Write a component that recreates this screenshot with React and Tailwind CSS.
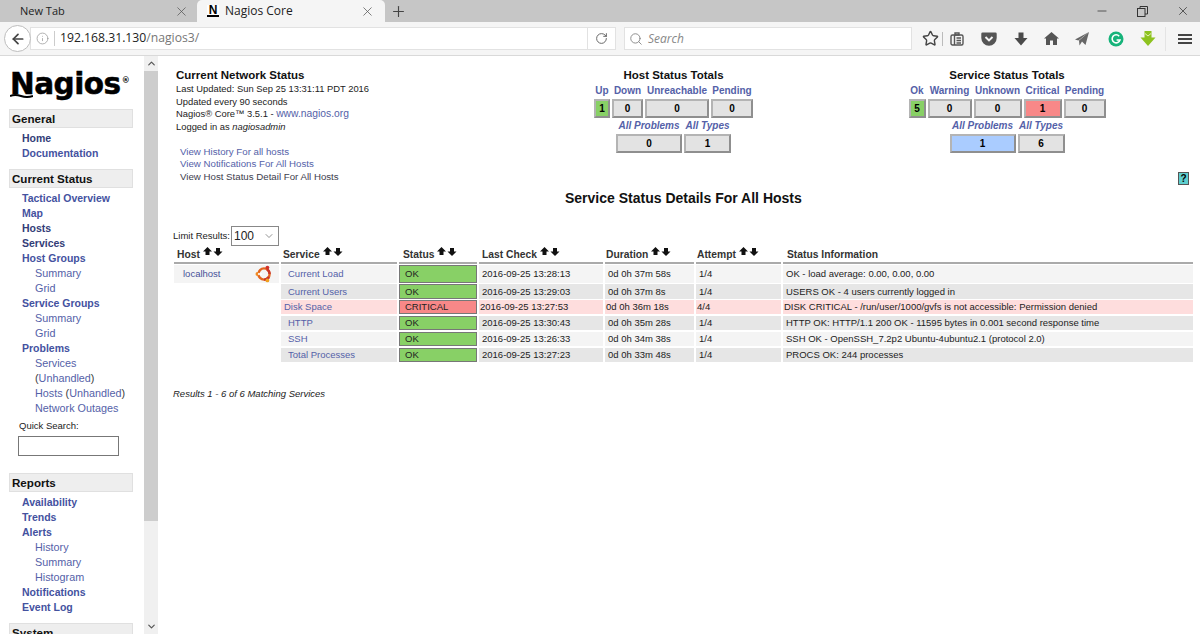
import React from "react";
import { ArrowLeft, Info, RotateCw, Search, Star, X, Plus, Minus, ChevronUp, ChevronDown, ChevronDown as Caret } from "lucide-react";

const SIDEBAR = [
  {
    title: "General",
    links: [
      ["Home", 0, true],
      ["Documentation", 0],
    ],
  },
  {
    title: "Current Status",
    links: [
      ["Tactical Overview", 0],
      ["Map", 0],
      ["Hosts", 0, true],
      ["Services", 0, true],
      ["Host Groups", 0],
      ["Summary", 1],
      ["Grid", 1],
      ["Service Groups", 0],
      ["Summary", 1],
      ["Grid", 1],
      ["Problems", 0],
      ["Services", 1],
      ["(Unhandled)", 1],
      ["Hosts (Unhandled)", 1],
      ["Network Outages", 1],
    ],
    search: true,
  },
  {
    title: "Reports",
    links: [
      ["Availability", 0],
      ["Trends", 0],
      ["Alerts", 0],
      ["History", 1],
      ["Summary", 1],
      ["Histogram", 1],
      ["Notifications", 0],
      ["Event Log", 0],
    ],
  },
  { title: "System", links: [] },
];

const ROWS = [
  ["Current Load", "OK", "2016-09-25 13:28:13", "0d 0h 37m 58s", "1/4", "OK - load average: 0.00, 0.00, 0.00"],
  ["Current Users", "OK", "2016-09-25 13:29:03", "0d 0h 37m 8s", "1/4", "USERS OK - 4 users currently logged in"],
  ["Disk Space", "CRITICAL", "2016-09-25 13:27:53", "0d 0h 36m 18s", "4/4", "DISK CRITICAL - /run/user/1000/gvfs is not accessible: Permission denied"],
  ["HTTP", "OK", "2016-09-25 13:30:43", "0d 0h 35m 28s", "1/4", "HTTP OK: HTTP/1.1 200 OK - 11595 bytes in 0.001 second response time"],
  ["SSH", "OK", "2016-09-25 13:26:33", "0d 0h 34m 38s", "1/4", "SSH OK - OpenSSH_7.2p2 Ubuntu-4ubuntu2.1 (protocol 2.0)"],
  ["Total Processes", "OK", "2016-09-25 13:27:23", "0d 0h 33m 48s", "1/4", "PROCS OK: 244 processes"],
];

const ROW_BG = ["bg-[#f4f4f4]", "bg-[#e6e6e6]", "bg-[#fedddd]", "bg-[#e6e6e6]", "bg-[#f4f4f4]", "bg-[#e6e6e6]"];
const ROW_H = ["h-[17.8px]", "h-[14.1px]", "h-[14.1px]", "h-[14.1px]", "h-[14.1px]", "h-[14.1px]"];
const COLS = "grid grid-cols-[105px_116px_78px_124px_89px_85px_410px] gap-x-[2px]";

function TabClose({ className }) {
  return <X className={className} size={15} strokeWidth={1.2} color="#555" />;
}

function SortArrows() {
  return (
    <svg width="20" height="9" viewBox="0 0 20 9" className="ml-[3px] mb-[6px] inline-block" fill="#111">
      <path d="M4.5 0 L9 4.5 H6.5 V8 H2.5 V4.5 H0 Z" />
      <path d="M13 1 H17 V4.5 H19.5 L15 9 L10.5 4.5 H13 Z" />
    </svg>
  );
}

function UbuntuLogo() {
  return (
    <svg width="18" height="18" viewBox="0 0 18 18">
      <circle cx="9" cy="9" r="5.6" fill="none" stroke="#e2651f" strokeWidth="2.4" />
      <path d="M12 4.2 A5.6 5.6 0 0 1 14.6 9" fill="none" stroke="#c8352b" strokeWidth="2.4" />
      <path d="M14 12 A5.6 5.6 0 0 1 9 14.6" fill="none" stroke="#c8352b" strokeWidth="2.4" />
      <circle cx="2.4" cy="9" r="1.9" fill="#f08a24" />
      <circle cx="12.4" cy="2.6" r="1.9" fill="#d2332b" />
      <circle cx="12.4" cy="15.4" r="1.9" fill="#f0a020" />
      <rect x="3" y="8.2" width="4" height="1.6" fill="#fff" />
    </svg>
  );
}

function ToolbarIcons() {
  return (
    <div className="flex items-center h-full">
      <Star size={17} strokeWidth={2} color="#444" className="ml-[10px]" />
      <div className="w-px h-[14px] bg-[#bbb] ml-[3px]" />
      <svg width="14" height="14" viewBox="0 0 14 14" className="ml-[7px]" fill="none" stroke="#555" strokeWidth="1.4">
        <rect x="1" y="3" width="12" height="10" rx="1.5" />
        <path d="M5 1 H9 V3 H5 Z M4.5 3 V13 M6.5 6 H11 M6.5 8.5 H11 M6.5 11 H11" />
      </svg>
      <svg width="16" height="14" viewBox="0 0 16 14" className="ml-[17px]">
        <path d="M1.5 0.5 H14.5 A1.2 1.2 0 0 1 15.7 1.7 V6 A7.7 7.7 0 0 1 0.3 6 V1.7 A1.2 1.2 0 0 1 1.5 0.5 Z" fill="#555" />
        <path d="M4.5 5 L8 8.4 L11.5 5" fill="none" stroke="#f5f5f5" strokeWidth="2" />
      </svg>
      <svg width="14" height="14" viewBox="0 0 14 14" className="ml-[17px]" fill="#4a4a4a">
        <path d="M4.5 0.5 H9.5 V6 H13.5 L7 13.5 L0.5 6 H4.5 Z" />
      </svg>
      <svg width="15" height="13" viewBox="0 0 15 13" className="ml-[16px]" fill="#555">
        <path d="M7.5 0 L15 6.5 H13 V13 H9 V8.5 H6 V13 H2 V6.5 H0 Z" />
      </svg>
      <svg width="14" height="14" viewBox="0 0 14 14" className="ml-[16px]" fill="#666">
        <path d="M14 0 L10.5 13 L7 9.5 L4.5 13.5 L4 8.5 Z" />
        <path d="M14 0 L0 7.5 L3.4 8.4 Z" />
      </svg>
      <svg width="16" height="16" viewBox="0 0 16 16" className="ml-[19px]">
        <circle cx="8" cy="8" r="7.5" fill="#16b37a" />
        <path d="M11.2 5.2 A4 4 0 1 0 12 9 H8.6" fill="none" stroke="#fff" strokeWidth="1.6" />
      </svg>
      <svg width="16" height="16" viewBox="0 0 16 16" className="ml-[16px]">
        <path d="M4.5 0 H11.5 V6.5 H15.5 L8 15 L0.5 6.5 H4.5 Z" fill="#8dc21f" />
        <path d="M5 2.5 L8 5 L11 2.5" fill="none" stroke="#e6f3b8" strokeWidth="1" />
      </svg>
      <div className="w-px h-[24px] bg-[#e4e4e4] ml-[9px]" />
      <div className="ml-[12px] flex flex-col gap-[2px]">
        <div className="w-[14px] h-[2px] bg-[#444]" />
        <div className="w-[14px] h-[2px] bg-[#444]" />
        <div className="w-[14px] h-[2px] bg-[#444]" />
      </div>
    </div>
  );
}

function BrowserChrome() {
  return (
    <div className="font-['Open_Sans',sans-serif] shrink-0">
      <div className="h-[22px] bg-[#c6c6c6] flex items-center text-[11px] text-[#222]">
        <div className="w-[197px] flex items-center pl-[20px] pr-[8px] justify-between">
          <span>New Tab</span>
          <TabClose />
        </div>
        <div className="w-[188px] h-full bg-[#f5f5f5] rounded-t-[5px] flex items-center pl-[10px] pr-[10px]">
          <span className="w-[12px] h-[12px] bg-white border-b-2 border-black font-['Liberation_Sans',sans-serif] font-bold text-[12px] leading-[10px] text-center text-black">N</span>
          <span className="ml-[6px] flex-1 text-[12px]">Nagios Core</span>
          <TabClose />
        </div>
        <Plus size={17} strokeWidth={1.6} color="#444" className="ml-[5px]" />
        <div className="ml-auto flex items-center h-full text-[#333]">
          <Minus size={14} strokeWidth={1.3} />
          <svg width="11" height="11" viewBox="0 0 11 11" className="ml-[28px]" fill="none" stroke="#333" strokeWidth="1">
            <rect x="0.5" y="2.5" width="7.5" height="8" />
            <path d="M3 2.5 V0.5 H10.5 V8 H8" />
          </svg>
          <X size={14} strokeWidth={1.3} className="ml-[28px] mr-[10px]" />
        </div>
      </div>
      <div className="h-[34px] bg-[#f5f5f5] border-b border-[#d9d9d9] flex items-center">
        <div className="ml-[4px] w-[27px] h-[27px] rounded-full border border-[#bdbdbd] bg-white flex items-center justify-center z-10">
          <ArrowLeft size={16} strokeWidth={2.6} color="#444" />
        </div>
        <div className="-ml-[1px] w-[586px] h-[23px] bg-white border border-[#e2e2e2] flex items-center">
          <Info size={13} strokeWidth={1.4} color="#999" className="ml-[5px]" />
          <div className="w-px h-[15px] bg-[#ccc] ml-[5px]" />
          <span className="ml-[5px] text-[12.2px] text-[#222]">
            192.168.31.130<span className="text-[#777]">/nagios3/</span>
          </span>
          <div className="ml-auto w-px h-[23px] bg-[#e2e2e2]" />
          <RotateCw size={13} strokeWidth={1.8} color="#666" className="mx-[7px]" />
        </div>
        <div className="ml-[8px] w-[288px] h-[23px] bg-white border border-[#e2e2e2] flex items-center">
          <Search size={14} strokeWidth={1.6} color="#888" className="ml-[4px]" />
          <span className="ml-[5px] text-[12px] italic text-[#888]">Search</span>
        </div>
        <ToolbarIcons />
      </div>
    </div>
  );
}

function NagiosLogo() {
  return (
    <div className="relative h-[32px] ml-[10px] mt-[9px] font-['DejaVu_Sans',sans-serif] font-bold text-[29.5px] leading-[32px] text-black tracking-[-0.5px] [-webkit-text-stroke:0.5px_black]">
      Nagios<span className="text-[8px] align-super ml-[1px] [-webkit-text-stroke:0px_black]">®</span>
      <svg width="23" height="4" viewBox="0 0 23 4" className="absolute left-0 top-[29px]">
        <path d="M0 2 Q5 0 11 2 T23 2" fill="none" stroke="#000" strokeWidth="2" />
      </svg>
    </div>
  );
}

function SideLink({ label, sub, dark }) {
  if (label === "Hosts (Unhandled)") {
    return (
      <div className="pl-[35px] h-[15px] leading-[15px] text-[10.8px] text-[#5461a8] whitespace-nowrap">
        Hosts <span className="text-[#3b3b3b]">(</span>Unhandled<span className="text-[#3b3b3b]">)</span>
      </div>
    );
  }
  if (label === "(Unhandled)") {
    return (
      <div className="pl-[35px] h-[15px] leading-[15px] text-[10.8px] text-[#5461a8]">
        <span className="text-[#3b3b3b]">(</span>Unhandled<span className="text-[#3b3b3b]">)</span>
      </div>
    );
  }
  return (
    <div
      className={
        sub
          ? "pl-[35px] h-[15px] leading-[15px] text-[10.8px] text-[#5461a8] whitespace-nowrap"
          : `pl-[22px] h-[15px] leading-[15px] text-[10.5px] font-bold whitespace-nowrap ${dark ? "text-[#333d78]" : "text-[#44529f]"}`
      }
    >
      {label}
    </div>
  );
}

function Sidebar() {
  return (
    <aside className="w-[144px] shrink-0 bg-white font-['Liberation_Sans',sans-serif] overflow-hidden">
      <NagiosLogo />
      <div className="mt-[12px] flex flex-col gap-[8px]">
        {SIDEBAR.map((section) => (
          <div key={section.title}>
            <div className="ml-[9px] w-[124px] h-[19px] bg-[#eeeeee] border border-[#e0e0e0] pl-[2px] leading-[17px] text-[11.6px] font-bold text-[#111]">
              {section.title}
            </div>
            <div className="mt-[2px] pt-[1px]">
              {section.links.map(([label, sub, dark], i) => (
                <SideLink key={label + i} label={label} sub={sub} dark={dark} />
              ))}
            </div>
            {section.search && (
              <div className="pb-[9px]">
                <div className="pl-[19px] mt-[3px] text-[9.5px] h-[13px] leading-[13px] text-[#222]">Quick Search:</div>
                <div className="ml-[18px] mt-[4px] w-[101px] h-[20px] border border-[#777] bg-white" />
              </div>
            )}
          </div>
        ))}
      </div>
    </aside>
  );
}

function Scrollbar() {
  return (
    <div className="w-[14px] shrink-0 bg-[#f0f0f0] flex flex-col items-center">
      <div className="h-[15px] flex items-center">
        <ChevronUp size={11} strokeWidth={2.6} color="#555" />
      </div>
      <div className="w-full h-[450px] bg-[#cdcdcd]" />
      <div className="mt-auto h-[15px] flex items-center">
        <ChevronDown size={11} strokeWidth={2.6} color="#555" />
      </div>
    </div>
  );
}

function StatBox({ value, w, bg = "bg-[#e3e3e3]" }) {
  return (
    <div
      style={{ width: w }}
      className={`h-[19px] border-2 border-t-[#b4b4b4] border-l-[#b4b4b4] border-r-[#8f8f8f] border-b-[#8f8f8f] ${bg} flex items-center justify-center text-[10px] font-bold text-black`}
    >
      {value}
    </div>
  );
}

function Totals({ title, cols, problems, types, problemsBg, className }) {
  return (
    <div className={`flex flex-col items-center ${className}`}>
      <div className="text-[11.5px] font-bold leading-[14px] text-[#111] h-[14px]">{title}</div>
      <div className="flex gap-[2px] mt-[2px]">
        {cols.map((c) => (
          <div key={c.label} style={{ width: c.w }} className="flex flex-col items-center">
            <div className="h-[14px] leading-[14px] text-[10px] font-bold text-[#5461a8] whitespace-nowrap">{c.label}</div>
            <div className="mt-[1px]">
              <StatBox value={c.value} w={c.w} bg={c.bg} />
            </div>
          </div>
        ))}
      </div>
      <div className="flex gap-[2px] mt-[1px]">
        <div className="w-[66px] flex flex-col items-center">
          <div className="h-[14px] leading-[14px] text-[10px] font-bold italic text-[#5461a8] whitespace-nowrap">All Problems</div>
          <div className="mt-[1px]">
            <StatBox value={problems} w={66} bg={problemsBg} />
          </div>
        </div>
        <div className="w-[47px] flex flex-col items-center">
          <div className="h-[14px] leading-[14px] text-[10px] font-bold italic text-[#5461a8] whitespace-nowrap">All Types</div>
          <div className="mt-[1px]">
            <StatBox value={types} w={47} />
          </div>
        </div>
      </div>
    </div>
  );
}

function TopInfo() {
  return (
    <div className="flex items-start">
      <div className="w-[418px] shrink-0 pl-[18px] text-[9.4px] leading-[12.5px] text-[#222]">
        <div className="text-[11.5px] font-bold leading-[15px] text-[#111]">Current Network Status</div>
        <div>Last Updated: Sun Sep 25 13:31:11 PDT 2016</div>
        <div>Updated every 90 seconds</div>
        <div>
          Nagios® Core™ 3.5.1 - <span className="text-[10.3px] text-[#5461a8]">www.nagios.org</span>
        </div>
        <div>
          Logged in as <i>nagiosadmin</i>
        </div>
        <div className="mt-[12.5px] pl-[4px] text-[9.7px] text-[#5461a8]">
          <div>View History For all hosts</div>
          <div>View Notifications For All Hosts</div>
          <div className="text-[#3d3d4d]">View Host Status Detail For All Hosts</div>
        </div>
      </div>
      <Totals
        className="w-[161px] shrink-0 ml-[17px]"
        title="Host Status Totals"
        problems="0"
        types="1"
        cols={[
          { label: "Up", value: "1", w: 16, bg: "bg-[#88d066]" },
          { label: "Down", value: "0", w: 31 },
          { label: "Unreachable", value: "0", w: 64 },
          { label: "Pending", value: "0", w: 42 },
        ]}
      />
      <Totals
        className="w-[198px] shrink-0 ml-[154px]"
        title="Service Status Totals"
        problems="1"
        types="6"
        problemsBg="bg-[#aaccff]"
        cols={[
          { label: "Ok", value: "5", w: 17, bg: "bg-[#88d066]" },
          { label: "Warning", value: "0", w: 44 },
          { label: "Unknown", value: "0", w: 48 },
          { label: "Critical", value: "1", w: 38, bg: "bg-[#f88888]" },
          { label: "Pending", value: "0", w: 42 },
        ]}
      />
    </div>
  );
}

function HeaderCell({ label, sort, pad = "pl-[3px]" }) {
  return (
    <div className={`h-[18px] border-b-2 border-[#aaaaaa] ${pad} flex items-end text-[#333] whitespace-nowrap`}>
      <span className="text-[10.3px] font-bold leading-[14px]">{label}</span>
      {sort && <SortArrows />}
    </div>
  );
}

function ServiceTable() {
  return (
    <div className="ml-[16px] text-[9.5px] leading-[12px] text-[#222]">
      <div className={COLS}>
        <HeaderCell label="Host" sort />
        <HeaderCell label="Service" sort pad="pl-[2px]" />
        <HeaderCell label="Status" sort pad="pl-[4px]" />
        <HeaderCell label="Last Check" sort />
        <HeaderCell label="Duration" sort pad="pl-[1px]" />
        <HeaderCell label="Attempt" sort pad="pl-[1px]" />
        <HeaderCell label="Status Information" pad="pl-[4px]" />
      </div>
      <div className="mt-[1px] flex flex-col gap-[1.7px]">
        {ROWS.map((r, i) => {
          const crit = r[1] === "CRITICAL";
          return (
            <div key={r[0]} className={`${COLS} ${ROW_H[i]}`}>
              {i === 0 ? (
                <div className="bg-[#f4f4f4] flex items-center justify-between pl-[9px] pr-[6px] text-[#475299]">
                  <span>localhost</span>
                  <UbuntuLogo />
                </div>
              ) : (
                <div />
              )}
              <div className={`${ROW_BG[i]} flex items-center text-[#5461a8] ${crit ? "pl-[3px]" : "pl-[7px]"}`}>{r[0]}</div>
              <div
                className={`${crit ? "bg-[#f88888]" : "bg-[#88d066]"} border border-[#777] flex items-center pl-[5px] text-[#222]`}
              >
                {r[1]}
              </div>
              {r.slice(2, 6).map((cell, j) => (
                <div
                  key={j}
                  className={`${ROW_BG[i]} flex items-center whitespace-nowrap ${crit ? "pl-[1px]" : "pl-[3px]"}`}
                >
                  {cell}
                </div>
              ))}
            </div>
          );
        })}
      </div>
      <div className="mt-[26px] -ml-[1px] text-[9.5px] italic text-[#222]">Results 1 - 6 of 6 Matching Services</div>
    </div>
  );
}

export default function App() {
  return (
    <div className="w-[1200px] h-[634px] overflow-hidden bg-white flex flex-col">
      <BrowserChrome />
      <div className="flex flex-1 min-h-0 font-['Liberation_Sans',sans-serif]">
        <Sidebar />
        <Scrollbar />
        <main className="flex-1 pt-[12px] min-w-0">
          <TopInfo />
          <div className="relative">
            <div className="absolute right-[11px] top-[-11px] w-[11px] h-[13px] bg-[#5fcfcf] border border-[#555] text-[10px] font-bold leading-[11px] text-center text-black">
              ?
            </div>
          </div>
          <h1 className="mt-[7px] ml-[407px] text-[14px] font-bold leading-[16px] text-[#111] whitespace-nowrap">
            Service Status Details For All Hosts
          </h1>
          <div className="mt-[20px] ml-[15px] flex items-center text-[9.5px] text-[#222] h-[20px]">
            Limit Results:
            <div className="ml-[1px] w-[48px] h-[20px] border border-[#888] bg-white flex items-center justify-between pl-[2px] pr-[3px] text-[12px]">
              100
              <Caret size={12} strokeWidth={1.4} color="#666" />
            </div>
          </div>
          <ServiceTable />
        </main>
      </div>
    </div>
  );
}
